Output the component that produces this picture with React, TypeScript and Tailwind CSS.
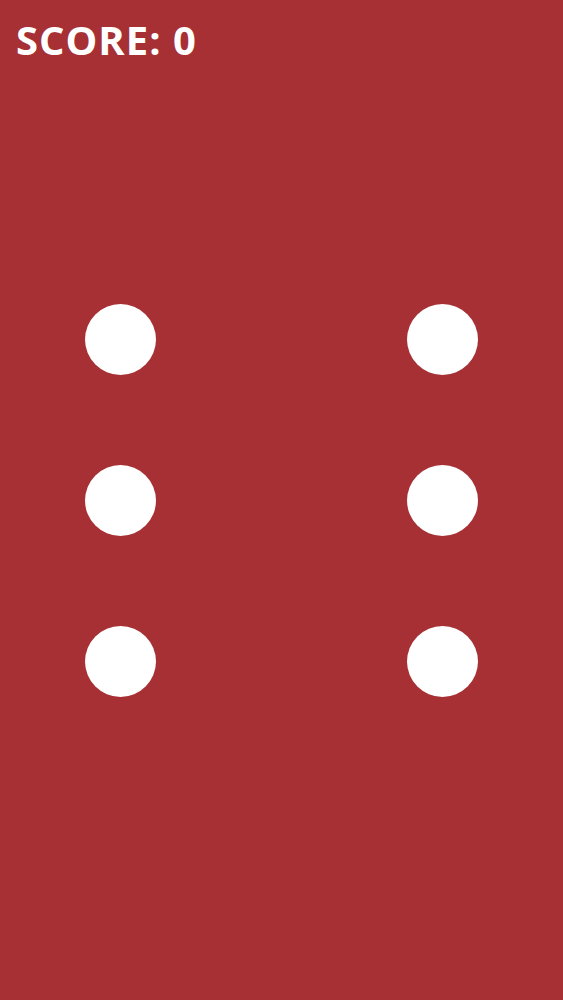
import React from 'react';

const rows = [0, 1, 2];

const Dot: React.FC = () => <div className="w-[71px] h-[71px] rounded-full bg-white" />;

const App: React.FC = () => {
  return (
    <div className="relative w-full h-screen bg-[#a63034] overflow-hidden">
      {/* HUD */}
      <div className="absolute left-[16px] top-[20px] text-white text-[40px] leading-none font-bold tracking-[0.025em] font-['Open_Sans',sans-serif]">
        SCORE: 0
      </div>

      <div className="h-full flex flex-col justify-center gap-[90px] px-[85px]">
        {rows.map((r) => (
          <div key={r} className="flex justify-between">
            <Dot />
            <Dot />
          </div>
        ))}
      </div>
    </div>
  );
};

export default App;
